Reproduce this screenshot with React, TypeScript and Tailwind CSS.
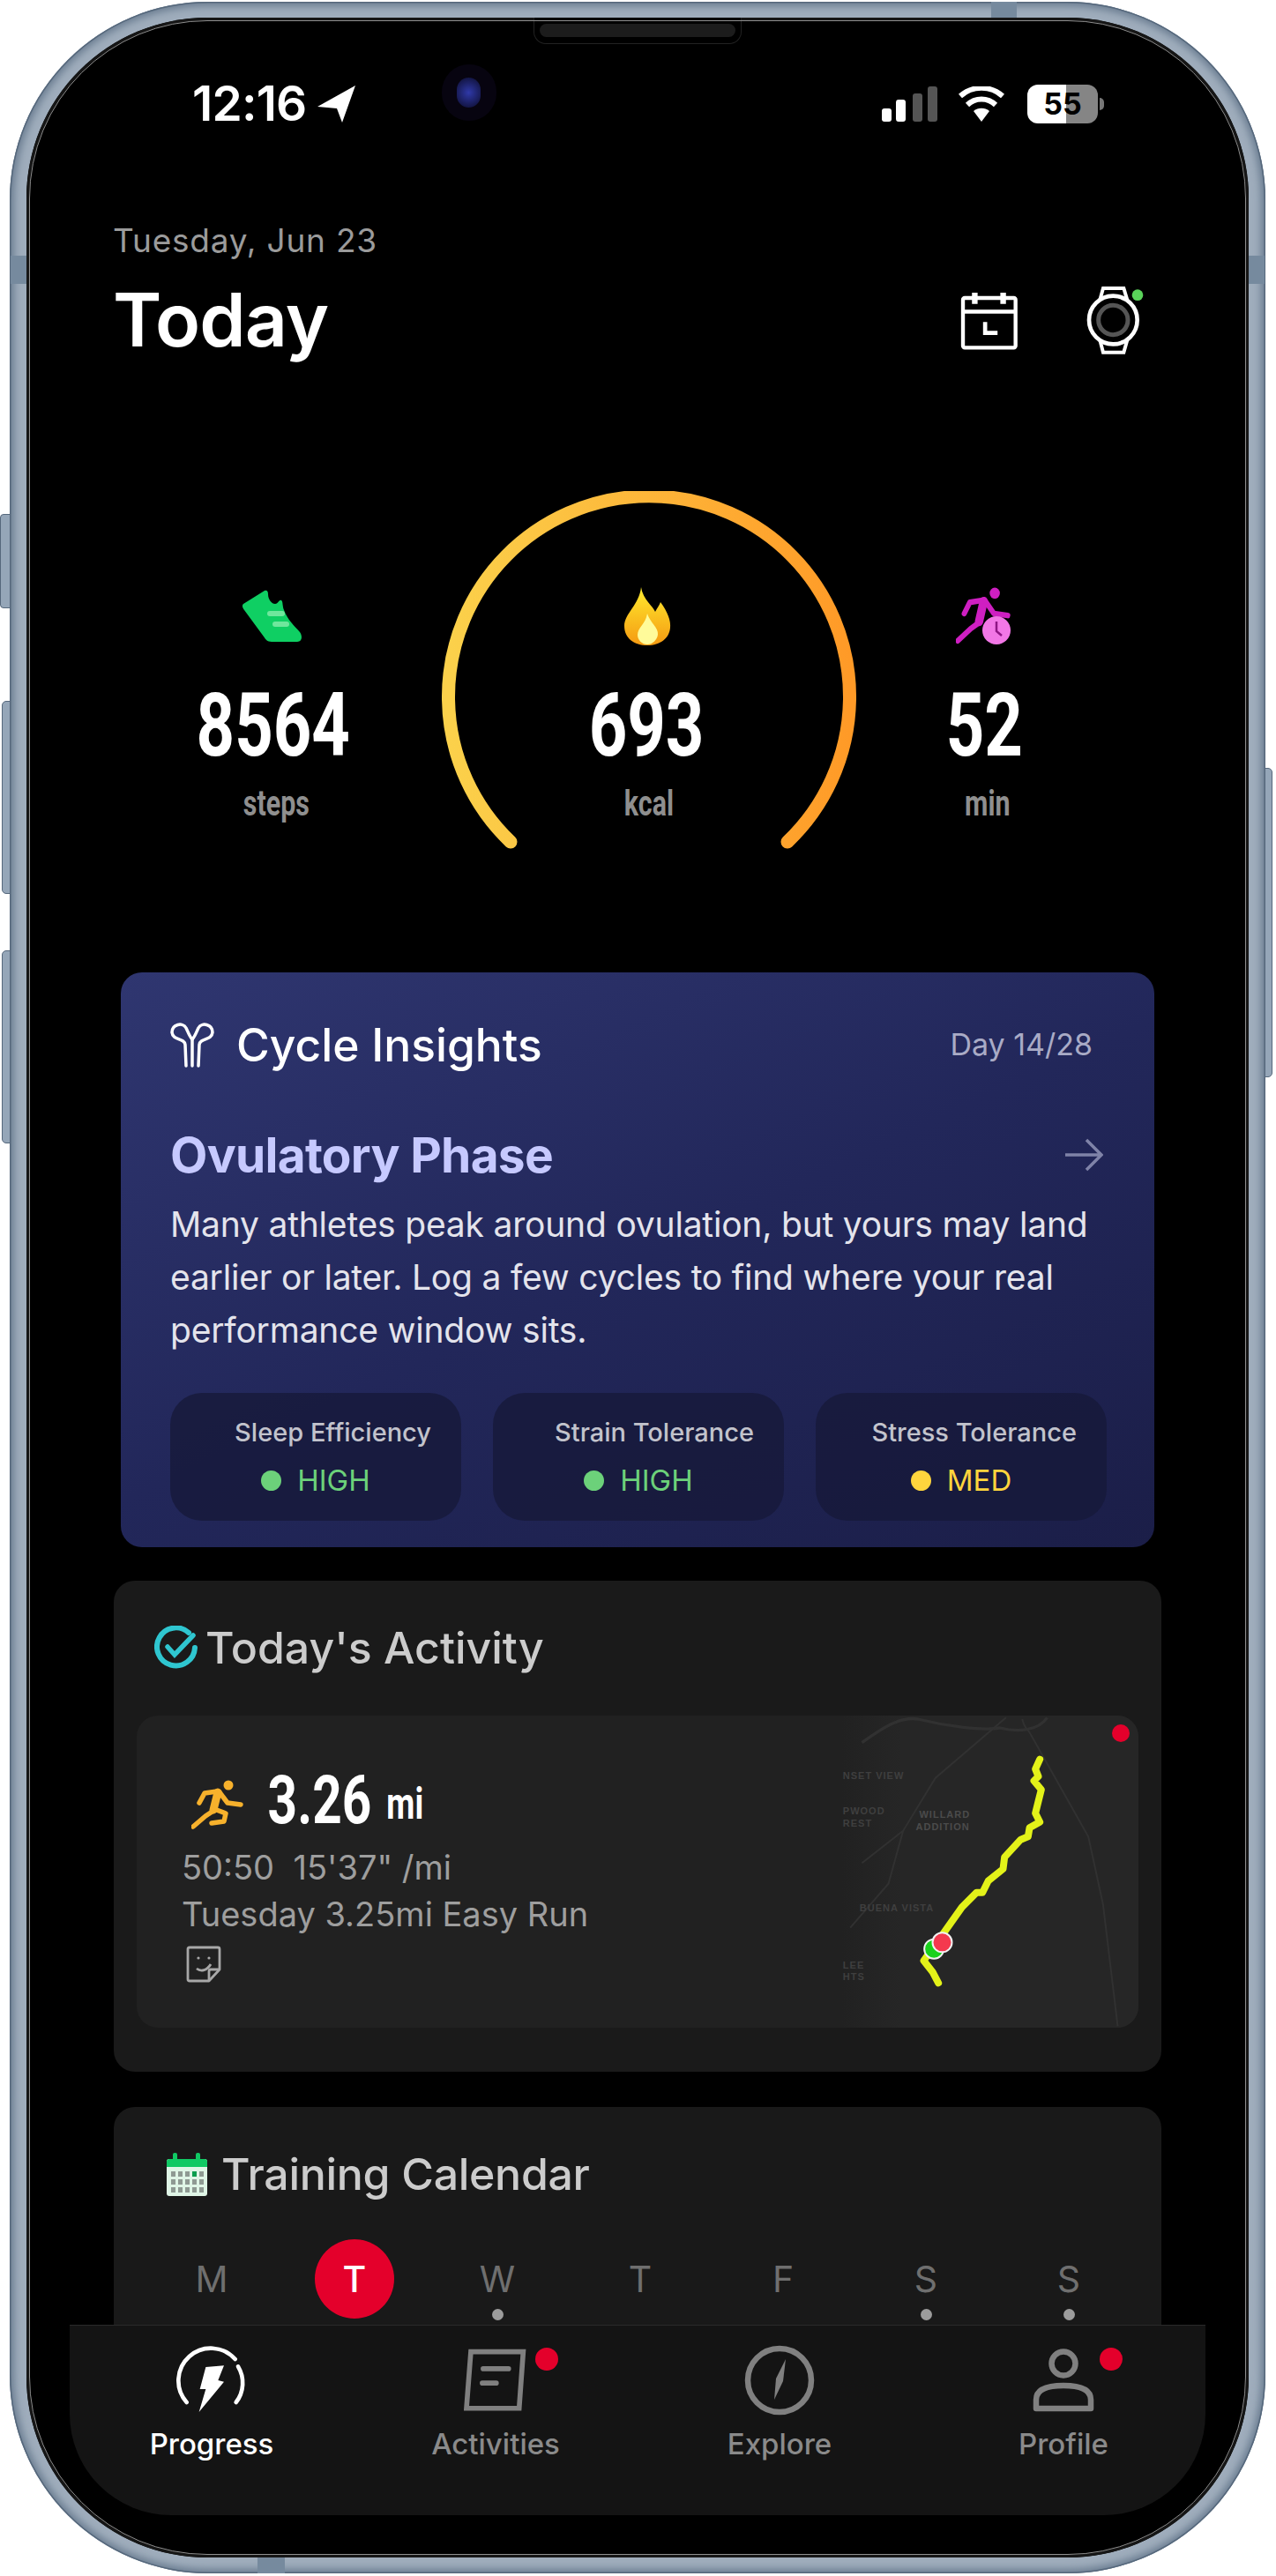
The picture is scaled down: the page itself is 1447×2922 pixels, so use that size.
const numeric = "font-['Roboto',sans-serif] inline-block";

function Runner({ colour, className }: { colour: string; className: string }) {
  return (
    <svg viewBox="0 0 60 56" className={className} fill="none" stroke={colour} strokeWidth="5.5" strokeLinecap="round" strokeLinejoin="round">
      <circle cx="42" cy="6" r="5.5" fill={colour} stroke="none" />
      <path d="M30 14 L25 34" strokeWidth="9" />
      <path d="M29 13 L15 15 L9 26" />
      <path d="M32 14 L41 26 L56 28" />
      <path d="M25 35 L16 41 L2 53" />
      <path d="M26 33 L39 38 L37 47 L23 49" />
    </svg>
  );
}

function StatusBar() {
  return (
    <div className="flex h-[45px] items-center pl-[188px] pr-[164px]">
      <span className="text-[55px] font-semibold leading-none tracking-[-0.8px] text-white">12:16</span>
      <svg viewBox="0 0 44 42" className="ml-[12px] h-[42px] w-[44px]">
        <path d="M0 24 L43 0 L28 42 L22 26 Z" fill="#fff" />
      </svg>
      <div className="-mt-[25px] ml-[97px] flex h-[64px] w-[62px] items-center justify-center rounded-full bg-[#070410]">
        <div className="h-[34px] w-[27px] rounded-full bg-[radial-gradient(circle,#2f39a8,#0b0b28)]" />
      </div>
      <div className="ml-auto flex items-center">
        <svg viewBox="0 0 63 40" className="h-[40px] w-[63px]">
          <rect x="0" y="25" width="11" height="15" rx="3" fill="#fff" />
          <rect x="16" y="15" width="11" height="25" rx="3" fill="#fff" />
          <rect x="35" y="8" width="11" height="32" rx="3" fill="#555" />
          <rect x="52" y="0" width="11" height="40" rx="3" fill="#555" />
        </svg>
        <svg viewBox="0 0 54 40" className="ml-[23px] h-[40px] w-[54px]">
          <path d="M27 40 L36 28 A14 14 0 0 0 18 28 Z" fill="#fff" />
          <path d="M11 21 A23 23 0 0 1 43 21" fill="none" stroke="#fff" strokeWidth="6" />
          <path d="M3 11 A36 36 0 0 1 51 11" fill="none" stroke="#fff" strokeWidth="6" />
        </svg>
        <div className="ml-[25px] flex h-[44px] w-[80px] items-center justify-center rounded-[12px] bg-[linear-gradient(90deg,#fff_55%,#858585_55%)] text-[34px] font-bold leading-none text-black">
          55
        </div>
        <div className="ml-[2px] h-[14px] w-[5px] rounded-r-full bg-[#777]" />
      </div>
    </div>
  );
}

function Header() {
  return (
    <div className="pl-[98px] pr-[116px]">
      <div className="mt-[111px] text-[37px] leading-[44px] tracking-[0.8px] text-[#9b9b9b]">Tuesday, Jun 23</div>
      <div className="mt-[18px] flex h-[100px] items-center">
        <h1 className="text-[84px] font-semibold leading-[100px] tracking-[-0.9px] text-white">Today</h1>
        <svg viewBox="85 60 200 200" className="ml-auto h-[67px] w-[67px]" fill="none" stroke="#fff" strokeWidth="13">
          <rect x="97" y="84" width="178" height="168" rx="6" />
          <path d="M97 130 H275" />
          <path d="M137 66 V104 M233 66 V104" strokeWidth="19" />
          <path d="M172 165 V202 H214" strokeWidth="14" />
        </svg>
        <svg viewBox="510 40 210 240" className="ml-[75px] h-[80px] w-[70px]" fill="none" stroke="#fff" strokeWidth="12">
          <path d="M562 92 L573 52 H643 L655 92" />
          <path d="M562 228 L573 270 H643 L655 228" />
          <circle cx="607" cy="160" r="82" strokeWidth="14" />
          <circle cx="607" cy="160" r="50" stroke="#555" strokeWidth="15" />
          <circle cx="690" cy="75" r="19" fill="#5ad35a" stroke="none" />
        </svg>
      </div>
    </div>
  );
}

function Stat({
  icon,
  value,
  label,
  width,
  valueShift = "",
  labelShift = "",
}: {
  icon: React.ReactNode;
  value: string;
  label: string;
  width: string;
  valueShift?: string;
  labelShift?: string;
}) {
  return (
    <div className={`relative flex flex-col items-center pt-[109px] ${width}`}>
      <div className="flex h-[66px] items-center">{icon}</div>
      <div className={`mt-[43px] scale-x-[0.76] text-[100px] font-bold leading-[95px] text-white ${numeric} ${valueShift}`}>{value}</div>
      <div className={`mt-[20px] scale-x-[0.76] text-[40px] font-bold leading-[44px] text-[#8f8f8f] ${numeric} ${labelShift}`}>{label}</div>
    </div>
  );
}

function Stats() {
  return (
    <div className="relative mt-[144px] flex h-[408px] pl-[130px]">
      <Stat
        width="w-[300px]"
        value="8564"
        label="steps"
        labelShift="ml-[6px]"
        icon={
          <svg viewBox="17 8 70 62" className="h-[62px] w-[70px]">
            <path d="M18 25 L42 10 C45 9 46 11 46 14 C46 20 50 25 54 25 C58 25 58 20 61 21 C63 22 62 27 64 32 C68 43 76 50 82 57 C85 61 85 68 79 68 L50 68 C45 68 43 65 41 62 L19 32 C17 29 16 27 18 25 Z" fill="#0fcf63" />
            <rect x="45" y="33" width="20" height="6" rx="3" fill="#6fe79c" />
            <rect x="51" y="45" width="19" height="6" rx="3" fill="#6fe79c" />
          </svg>
        }
      />
      <div className="relative ml-[41px] w-[470px]">
        <svg viewBox="0 0 470 410" className="absolute left-0 top-0 h-[410px] w-[470px]" fill="none">
          <defs>
            <linearGradient id="arcFill" x1="0" y1="0" x2="1" y2="0">
              <stop offset="0" stopColor="#fbd14b" />
              <stop offset="1" stopColor="#ff9a27" />
            </linearGradient>
          </defs>
          <path d="M78 398 A227.5 227.5 0 1 1 392 398" stroke="url(#arcFill)" strokeWidth="15" strokeLinecap="round" />
        </svg>
        <Stat
          width="w-[470px]"
          value="693"
          label="kcal"
          valueShift="-ml-[6px]"
          icon={
            <svg viewBox="0 0 54 66" className="-ml-[5px] h-[66px] w-[54px]">
              <defs>
                <linearGradient id="flameFill" x1="0" y1="0" x2="0" y2="1">
                  <stop offset="0" stopColor="#ffeb2e" />
                  <stop offset="1" stopColor="#f59a12" />
                </linearGradient>
              </defs>
              <path d="M20 0 C22 14 34 22 36 28 C38 24 41 20 42 17 C50 28 54 38 53 46 C52 58 42 66 27 66 C12 66 1 58 1 44 C1 30 18 20 20 0 Z" fill="url(#flameFill)" />
              <path d="M27 30 C30 40 40 46 39 54 C38 60 33 65 27 65 C21 65 16 60 16 54 C16 46 25 42 27 30 Z" fill="#fffb9a" />
            </svg>
          }
        />
      </div>
      <Stat
        width="w-[290px]"
        value="52"
        label="min"
        labelShift="ml-[8px]"
        icon={
          <svg viewBox="0 0 64 66" className="h-[66px] w-[64px]">
            <g transform="scale(1.05 1.15)" fill="none" stroke="#cf1fc2" strokeWidth="5.5" strokeLinecap="round" strokeLinejoin="round">
              <circle cx="42" cy="6" r="5.5" fill="#cf1fc2" stroke="none" />
              <path d="M30 14 L25 34" strokeWidth="9" />
              <path d="M29 13 L15 15 L9 26" />
              <path d="M32 14 L41 26 L56 28" />
              <path d="M25 35 L16 41 L2 53" />
            </g>
            <circle cx="46" cy="49" r="16" fill="#f277e6" />
            <path d="M46 39 V50 L52 55" stroke="#8e1684" strokeWidth="2.5" fill="none" />
          </svg>
        }
      />
    </div>
  );
}

function Chip({ label, level, colour, dot }: { label: string; level: string; colour: string; dot: string }) {
  return (
    <div className="flex h-[145px] w-[330px] flex-col justify-center rounded-[36px] bg-[#16193a]/80 pr-[34px]">
      <div className="text-right text-[29px] font-medium leading-[36px] text-[#c2c3cc]">{label}</div>
      <div className="mr-[-34px] mt-[17px] flex items-center justify-center gap-[18px]">
        <span className={`h-[23px] w-[23px] rounded-full ${dot}`} />
        <span className={`text-[33px] leading-[38px] ${colour}`}>{level}</span>
      </div>
    </div>
  );
}

function CycleCard() {
  return (
    <section className="mx-[107px] mt-[138px] h-[652px] rounded-[24px] bg-[linear-gradient(155deg,#2f3670,#22275a_50%,#1b1e48)] pl-[56px] pr-[54px] pt-[47px]">
      <div className="flex h-[70px] items-center">
        <svg viewBox="0 0 50 52" className="h-[52px] w-[50px]" fill="none" stroke="#fff" strokeWidth="3.5" strokeLinecap="round">
          <path d="M18 50 L17 26 C16 18 3 22 2 12 C2 3 14 0 18 7 C20 11 22 17 25 20 C28 17 30 11 32 7 C36 0 48 3 48 12 C47 22 34 18 33 26 L32 50" />
          <path d="M25 20 V50" />
        </svg>
        <h2 className="ml-[25px] text-[51.5px] font-medium leading-[60px] text-white">Cycle Insights</h2>
        <span className="ml-auto mr-[16px] text-[34px] leading-[40px] text-[#a9abc6]">Day 14/28</span>
      </div>
      <div className="mt-[57px] flex h-[66px] items-center">
        <h3 className="text-[55px] font-bold leading-[66px] tracking-[-0.7px] text-[#c6c9ff]">Ovulatory Phase</h3>
        <svg viewBox="0 0 44 38" className="ml-auto mr-[4px] h-[38px] w-[44px]" fill="none" stroke="#7f83a8" strokeWidth="3.5">
          <path d="M1 19 H42 M25 2 L42 19 L25 36" />
        </svg>
      </div>
      <p className="mt-[16px] text-[39px] leading-[60px] tracking-[-0.2px] text-[#e4e4ec]">
        Many athletes peak around ovulation, but yours may land earlier or later. Log a few cycles to find where your real performance window sits.
      </p>
      <div className="mt-[41px] flex justify-between">
        <Chip label="Sleep Efficiency" level="HIGH" colour="text-[#6cd17a]" dot="bg-[#6cd17a]" />
        <Chip label="Strain Tolerance" level="HIGH" colour="text-[#6cd17a]" dot="bg-[#6cd17a]" />
        <Chip label="Stress Tolerance" level="MED" colour="text-[#ffd53d]" dot="bg-[#ffd53d]" />
      </div>
    </section>
  );
}

function RouteMap() {
  const route =
    "M835 197 L820 230 L830 255 L815 270 L840 300 L830 340 L820 380 L835 410 L800 430 L795 460 L770 470 L715 530 L710 570 L660 610 L640 650 L620 650 L570 700 L510 785 L440 882 L470 920 L490 958";
  return (
    <div className="relative h-[354px] w-[337px] bg-[linear-gradient(90deg,#212121,#262626_20%)]">
      <svg viewBox="160 48 1010 1062" className="h-[354px] w-[337px]" fill="none">
        <g stroke="#313131" strokeWidth="6">
          <path d="M230 140 C300 90 360 50 420 60 C520 85 640 100 700 90 C760 105 830 100 860 55" strokeWidth="10" />
          <path d="M775 60 C780 80 790 95 800 105 L1000 460 L1050 690 L1100 1105" />
          <path d="M720 55 L480 260 L370 440 L230 550 M370 440 L320 620 L190 770" />
        </g>
        <g fill="#3f3f3f" fontFamily="Liberation Sans, sans-serif" fontSize="33" fontWeight="700" letterSpacing="3">
          <text x="165" y="264">NSET VIEW</text>
          <text x="165" y="385">PWOOD</text>
          <text x="165" y="425">REST</text>
          <text x="425" y="397" fill="#4b4b4b">WILLARD</text>
          <text x="413" y="438" fill="#4b4b4b">ADDITION</text>
          <text x="222" y="714">BUENA VISTA</text>
          <text x="165" y="908">LEE</text>
          <text x="165" y="948">HTS</text>
        </g>
        <path d={route} stroke="#e3f219" strokeWidth="24" strokeLinecap="round" strokeLinejoin="round" />
        <circle cx="475" cy="842" r="33" fill="#19d11c" stroke="#f2f2f2" strokeWidth="6" />
        <circle cx="503" cy="820" r="33" fill="#f4394e" stroke="#f2f2f2" strokeWidth="6" />
      </svg>
      <span className="absolute right-[10px] top-[10px] h-[20px] w-[20px] rounded-full bg-[#e4002b]" />
    </div>
  );
}

function ActivityCard() {
  return (
    <section className="mx-[99px] mt-[38px] h-[557px] rounded-[24px] bg-[#1a1a1a] px-[26px] pt-[48px]">
      <div className="flex h-[56px] items-center pl-[20px]">
        <svg viewBox="0 0 50 50" className="h-[50px] w-[50px]" fill="none" stroke="#2fc6d0" strokeWidth="6" strokeLinecap="round">
          <path d="M39 8 A21.5 21.5 0 1 0 46 25" />
          <path d="M15 24 L23 33 L44 11" strokeWidth="5.5" />
        </svg>
        <h2 className="ml-[8px] text-[50px] font-medium leading-[56px] text-[#cccccc]">Today's Activity</h2>
      </div>
      <div className="mt-[49px] flex h-[354px] justify-between overflow-hidden rounded-[24px] bg-[#212121]">
        <div className="pl-[51px] pt-[61px]">
          <div className="flex h-[70px] items-end pl-[11px]">
            <Runner colour="#f7b12c" className="mb-[2px] h-[56px] w-[60px]" />
            <span className="ml-[29px] flex w-[112px] justify-center">
              <span className={`scale-x-[0.77] text-[76px] font-bold leading-[70px] text-white ${numeric}`}>3.26</span>
            </span>
            <span className="ml-[20px] flex w-[42px] justify-center">
              <span className={`scale-x-[0.74] text-[50px] font-bold leading-[62px] text-white ${numeric}`}>mi</span>
            </span>
          </div>
          <div className="mt-[16px] whitespace-pre text-[38px] leading-[50px] text-[#9e9e9e]">50:50  15'37" /mi</div>
          <div className="mt-[3px] text-[38px] leading-[50px] text-[#9e9e9e]">Tuesday 3.25mi Easy Run</div>
          <svg viewBox="0 0 40 42" className="ml-[5px] mt-[11px] h-[42px] w-[40px]" fill="none" stroke="#a8a8a8" strokeWidth="2.8" strokeLinejoin="round">
            <path d="M4 2 H36 C37.5 2 38 2.5 38 4 V27 L26 40 H4 C2.5 40 2 39.5 2 38 V4 C2 2.5 2.5 2 4 2 Z" />
            <path d="M38 27 H28 C26.5 27 26 28 26 29 V40" />
            <circle cx="14" cy="14" r="1.6" fill="#a8a8a8" stroke="none" />
            <circle cx="26" cy="14" r="1.6" fill="#a8a8a8" stroke="none" />
            <path d="M12 26 C17 30 24 28 28 21" />
          </svg>
        </div>
        <RouteMap />
      </div>
    </section>
  );
}

const weekDays = [
  { letter: "M", today: false, planned: false },
  { letter: "T", today: true, planned: false },
  { letter: "W", today: false, planned: true },
  { letter: "T", today: false, planned: false },
  { letter: "F", today: false, planned: false },
  { letter: "S", today: false, planned: true },
  { letter: "S", today: false, planned: true },
];

function CalendarCard() {
  return (
    <section className="mx-[99px] mt-[40px] h-[560px] rounded-[24px] bg-[#191919] pt-[48px]">
      <div className="flex h-[56px] items-center pl-[60px]">
        <svg viewBox="0 0 46 50" className="h-[50px] w-[46px]">
          <rect x="0" y="8" width="46" height="42" rx="3" fill="#dff5e6" />
          <path d="M0 11 C0 9 1 8 3 8 H43 C45 8 46 9 46 11 V17 H0 Z" fill="#10c964" />
          <rect x="7" y="1" width="5" height="11" rx="2" fill="#10c964" />
          <rect x="33" y="1" width="5" height="11" rx="2" fill="#10c964" />
          <g fill="#8f9a93">
            {[22, 31, 40].map((y) =>
              [5, 13, 21, 29, 37].map((x) => <rect key={`${x}-${y}`} x={x} y={y} width="5" height="6" />),
            )}
          </g>
          <rect x="29" y="22" width="5" height="6" fill="#0a9e4e" />
        </svg>
        <h2 className="ml-[16px] text-[50px] font-medium leading-[56px] tracking-[-0.3px] text-[#cccccc]">Training Calendar</h2>
      </div>
      <div className="ml-[30px] mt-[46px] grid w-[1134px] grid-cols-7">
        {weekDays.map((day, index) => (
          <div key={index} className="flex flex-col items-center">
            <div
              className={`flex h-[90px] w-[90px] items-center justify-center rounded-full text-[41px] leading-none ${
                day.today ? "bg-[#e4002b] font-medium text-white" : "text-[#6f6f6f]"
              }`}
            >
              {day.letter}
            </div>
            {day.planned && <span className="-mt-[11px] h-[13px] w-[13px] rounded-full bg-[#9c9c9c]" />}
          </div>
        ))}
      </div>
    </section>
  );
}

function TabItem({ icon, label, active, badge }: { icon: React.ReactNode; label: string; active?: boolean; badge?: boolean }) {
  return (
    <div className="flex flex-col items-center">
      <div className="relative flex h-[80px] items-center justify-center">
        {icon}
        {badge && <span className="absolute -right-[32px] top-[3px] h-[26px] w-[26px] rounded-full bg-[#e4002b]" />}
      </div>
      <span className={`mt-[13px] text-[33px] font-medium leading-[38px] ${active ? "text-white" : "text-[#8a8a8a]"}`}>{label}</span>
    </div>
  );
}

function TabBar() {
  return (
    <nav className="mx-[49px] grid h-[216px] grid-cols-4 rounded-b-[115px] border-t border-[#2a2a2a] bg-[#141414] pt-[22px]">
      <TabItem
        active
        label="Progress"
        icon={
          <svg viewBox="100 30 270 240" className="h-[80px] w-[90px]" fill="none">
            <path d="M150 225 A108 108 0 0 1 315 78" stroke="#fff" strokeWidth="14" strokeLinecap="round" />
            <path d="M325 103 A108 108 0 0 1 318 225" stroke="#fff" strokeWidth="14" strokeLinecap="round" />
            <path d="M215 105 L277 100 L257 150 L277 155 L192 258 L215 180 L195 180 Z" fill="#fff" />
          </svg>
        }
      />
      <TabItem
        badge
        label="Activities"
        icon={
          <svg viewBox="1090 30 235 235" className="h-[78px] w-[78px]" fill="none" stroke="#808080" strokeWidth="17">
            <path d="M1123 50 H1302 L1288 243 H1108 Z" />
            <path d="M1165 108 H1252 M1162 157 H1210" strokeLinecap="round" />
          </svg>
        }
      />
      <TabItem
        label="Explore"
        icon={
          <svg viewBox="0 0 80 80" className="h-[80px] w-[80px]" fill="none">
            <circle cx="40" cy="40" r="36" stroke="#808080" strokeWidth="6.5" />
            <path d="M47 16 L44 41 L34 62 L36 38 Z" fill="#808080" />
          </svg>
        }
      />
      <TabItem
        badge
        label="Profile"
        icon={
          <svg viewBox="0 0 70 72" className="h-[72px] w-[70px]" fill="none" stroke="#808080" strokeWidth="6.5">
            <circle cx="35" cy="17" r="13.5" />
            <path d="M4 68 V58 C4 46 16 42 35 42 C54 42 66 46 66 58 V68 Z" strokeLinejoin="round" />
          </svg>
        }
      />
    </nav>
  );
}

export default function App() {
  return (
    <div className="relative h-[2922px] w-[1447px] overflow-hidden bg-white pl-[11px] pt-[2px] font-['Inter',sans-serif]">
      {/* side buttons */}
      <span className="absolute left-0 top-[583px] h-[107px] w-[14px] rounded-l-[4px] border border-[#56687c] bg-[#95a6b8]" />
      <span className="absolute left-[2px] top-[795px] h-[219px] w-[12px] rounded-l-[5px] border border-[#56687c] bg-[#95a6b8]" />
      <span className="absolute left-[2px] top-[1078px] h-[219px] w-[12px] rounded-l-[5px] border border-[#56687c] bg-[#95a6b8]" />
      <span className="absolute left-[1432px] top-[871px] h-[351px] w-[11px] rounded-r-[5px] border border-[#56687c] bg-[#95a6b8]" />

      {/* device body */}
      <div className="relative h-[2917px] w-[1424px] rounded-[225px] bg-[#9fadbc] p-[18px] pl-[19px] pr-[19px] shadow-[inset_0_0_0_1.5px_#56687c,inset_0_0_8px_5px_#6b7d91]">
        {/* antenna bands */}
        <span className="absolute left-[1px] top-[288px] h-[32px] w-[18px] bg-[#768a9e]" />
        <span className="absolute right-[1px] top-[288px] h-[32px] w-[18px] bg-[#768a9e]" />
        <span className="absolute left-[1113px] top-0 h-[18px] w-[29px] bg-[#768a9e]" />
        <span className="absolute bottom-0 left-[281px] h-[18px] w-[31px] bg-[#768a9e]" />

        <div className="relative flex h-full flex-col overflow-hidden rounded-[205px] bg-black shadow-[inset_0_0_0_3px_#161616]">
          {/* speaker notch */}
          <div className="absolute left-[575px] top-0 z-10 flex h-[30px] w-[236px] justify-center rounded-b-[14px] border border-t-0 border-[#222] bg-black">
            <span className="mt-[7px] h-[15px] w-[222px] rounded-full bg-[#1c1c1c]" />
          </div>
          <span className="pointer-events-none absolute inset-[3px] z-10 rounded-[202px] border border-[#8f8f8f]" />

          <div className="h-[2617px] overflow-hidden pt-[75px]">
            <StatusBar />
            <Header />
            <Stats />
            <CycleCard />
            <ActivityCard />
            <CalendarCard />
          </div>
          <TabBar />
        </div>
      </div>
    </div>
  );
}
